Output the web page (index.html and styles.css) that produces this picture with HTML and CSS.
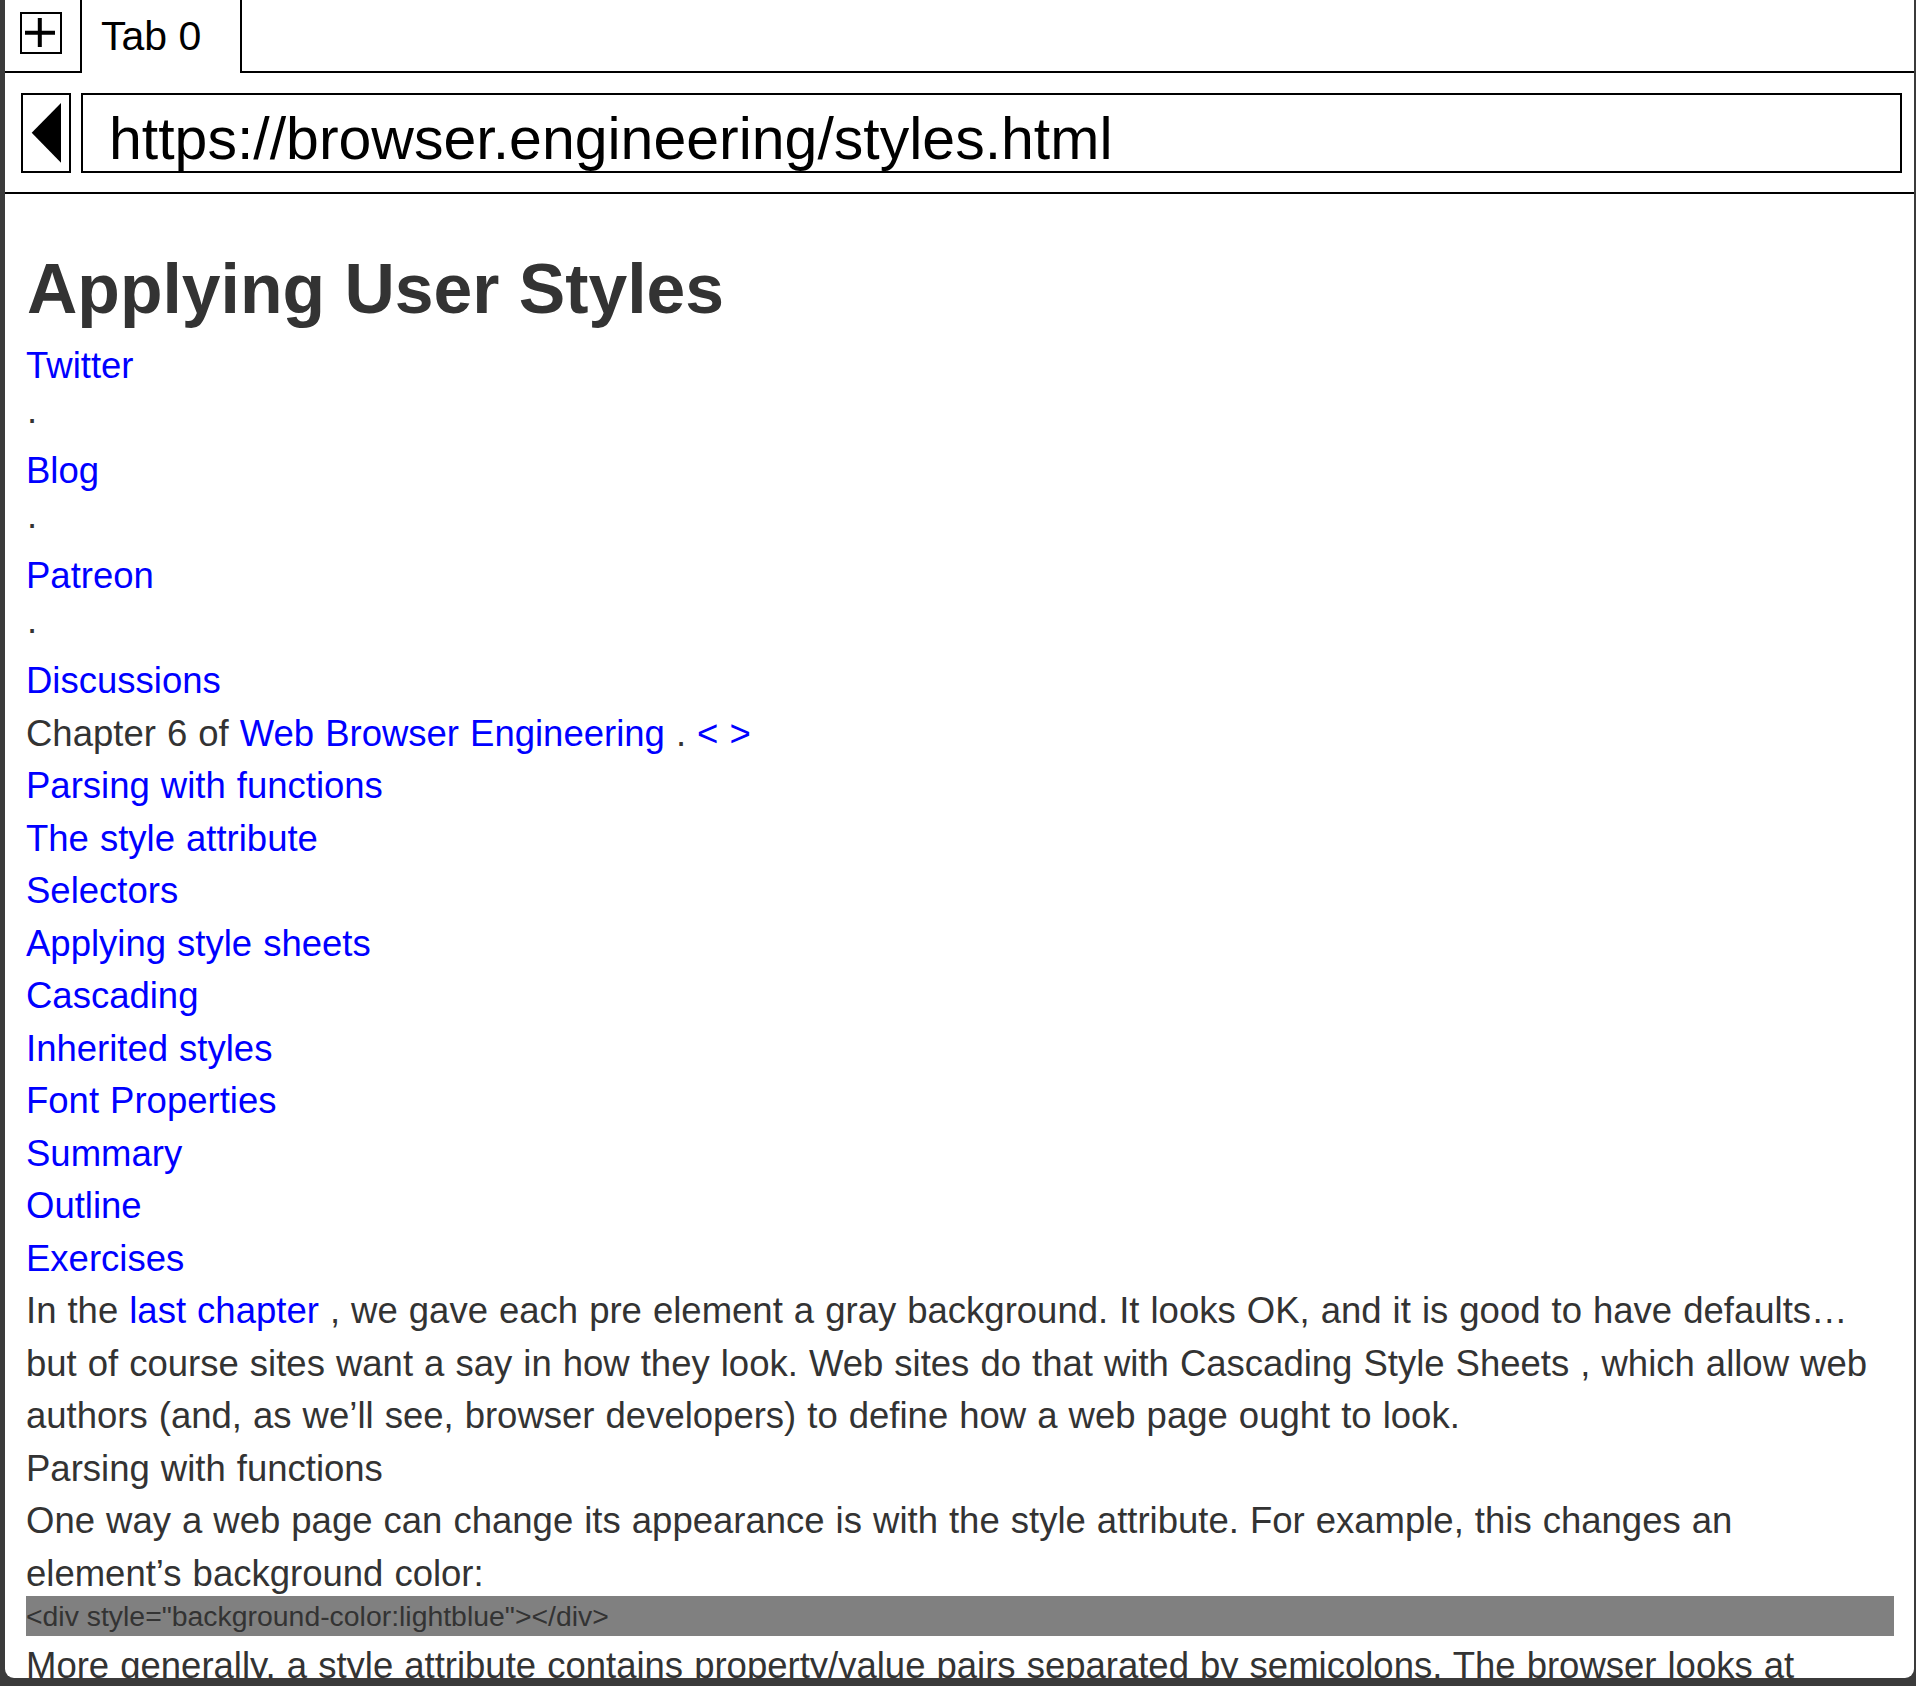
FILE: index.html
```html
<!DOCTYPE html>
<html>
<head>
<meta charset="utf-8">
<title>Applying User Styles</title>
<link rel="stylesheet" href="styles.css">
</head>
<body>
<div class="window">
  <div class="tabbar">
    <div class="newtab-area">
      <div class="newtab">
        <svg class="plus" viewBox="0 0 38 38" width="38" height="38"><path d="M3 18.7H33M17.8 4V33" stroke="#000" stroke-width="4" fill="none"/></svg>
      </div>
    </div>
    <div class="tab">Tab 0</div>
    <div class="tabfill"></div>
  </div>
  <div class="addressbar">
    <div class="back">
      <svg viewBox="0 0 46 76" width="46" height="76"><polygon points="8.7,37.7 38,8 38,67.7" fill="#000"/></svg>
    </div>
    <div class="url">https://browser.engineering/styles.html</div>
  </div>
  <div class="page">
    <h1 class="title">Applying User Styles</h1>
    <div class="line"><a href="#">Twitter</a></div>
    <div class="line">·</div>
    <div class="line"><a href="#">Blog</a></div>
    <div class="line">·</div>
    <div class="line"><a href="#">Patreon</a></div>
    <div class="line">·</div>
    <div class="line"><a href="#">Discussions</a></div>
    <div class="line">Chapter 6 of <a href="#">Web Browser Engineering</a> . <a href="#">&lt;</a> <a href="#">&gt;</a></div>
    <div class="line"><a href="#">Parsing with functions</a></div>
    <div class="line"><a href="#">The style attribute</a></div>
    <div class="line"><a href="#">Selectors</a></div>
    <div class="line"><a href="#">Applying style sheets</a></div>
    <div class="line"><a href="#">Cascading</a></div>
    <div class="line"><a href="#">Inherited styles</a></div>
    <div class="line"><a href="#">Font Properties</a></div>
    <div class="line"><a href="#">Summary</a></div>
    <div class="line"><a href="#">Outline</a></div>
    <div class="line"><a href="#">Exercises</a></div>
    <p class="para">In the <a href="#">last chapter</a> , we gave each pre element a gray background. It looks OK, and it is good to have defaults…<br>but of course sites want a say in how they look. Web sites do that with Cascading Style Sheets , which allow web<br>authors (and, as we’ll see, browser developers) to define how a web page ought to look.</p>
    <p class="para">Parsing with functions</p>
    <p class="para">One way a web page can change its appearance is with the style attribute. For example, this changes an<br>element’s background color:</p>
    <pre class="code">&lt;div style="background-color:lightblue"&gt;&lt;/div&gt;</pre>
    <p class="para after-code">More generally, a style attribute contains property/value pairs separated by semicolons. The browser looks at</p>
  </div>
</div>
</body>
</html>
```
FILE: styles.css
```css
html, body {
  margin: 0;
  padding: 0;
}
body {
  background: #3b3b3b;
  height: 1686px;
  overflow: hidden;
  font-family: "Liberation Sans", Arial, sans-serif;
}
.window {
  margin: 0 2px 0 5px;
  height: 1678px;
  background: #fff;
  border-radius: 0 0 9px 9px;
  overflow: hidden;
}
.tabbar {
  display: flex;
  height: 73px;
}
.newtab-area {
  width: 75px;
  height: 73px;
  box-sizing: border-box;
  border-bottom: 2px solid #000;
  padding: 12px 0 0 15px;
}
.newtab {
  width: 42px;
  height: 42px;
  box-sizing: border-box;
  border: 2px solid #000;
}
.plus {
  display: block;
}
.tab {
  width: 162px;
  height: 73px;
  box-sizing: border-box;
  border-left: 2px solid #000;
  border-right: 2px solid #000;
  padding: 16px 0 0 19px;
  font-size: 41px;
  line-height: 40px;
  color: #000;
}
.tabfill {
  flex: 1;
  height: 73px;
  box-sizing: border-box;
  border-bottom: 2px solid #000;
}
.addressbar {
  display: flex;
  gap: 10px;
  height: 121px;
  box-sizing: border-box;
  border-bottom: 2px solid #000;
  padding: 20px 12px 0 16px;
}
.back {
  width: 50px;
  height: 80px;
  box-sizing: border-box;
  border: 2px solid #000;
}
.back svg {
  display: block;
}
.url {
  flex: 1;
  height: 80px;
  box-sizing: border-box;
  border: 2px solid #000;
  padding: 12px 0 0 26px;
  font-size: 59px;
  line-height: 64px;
  color: #000;
  white-space: nowrap;
  overflow: hidden;
}
.page {
  padding: 50px 20px 0 21px;
  color: #333333;
  font-size: 36.5px;
  word-spacing: 0.9px;
}
.page a {
  color: #0000ff;
  text-decoration: none;
}
.title {
  margin: 0 0 5px 1px;
  font-size: 69.7px;
  font-weight: bold;
  line-height: 91px;
  word-spacing: 0;
  color: #333333;
}
.line {
  line-height: 52.5px;
  white-space: nowrap;
}
.para {
  margin: 0;
  line-height: 52.5px;
  white-space: nowrap;
}
.code {
  margin: -4px 0 0 0;
  height: 40px;
  background: #808080;
  font-family: "Liberation Sans", Arial, sans-serif;
  font-size: 28.4px;
  line-height: 40px;
  word-spacing: 0;
  color: #333333;
  white-space: pre;
}
.after-code {
  margin-top: 4px;
}
```
